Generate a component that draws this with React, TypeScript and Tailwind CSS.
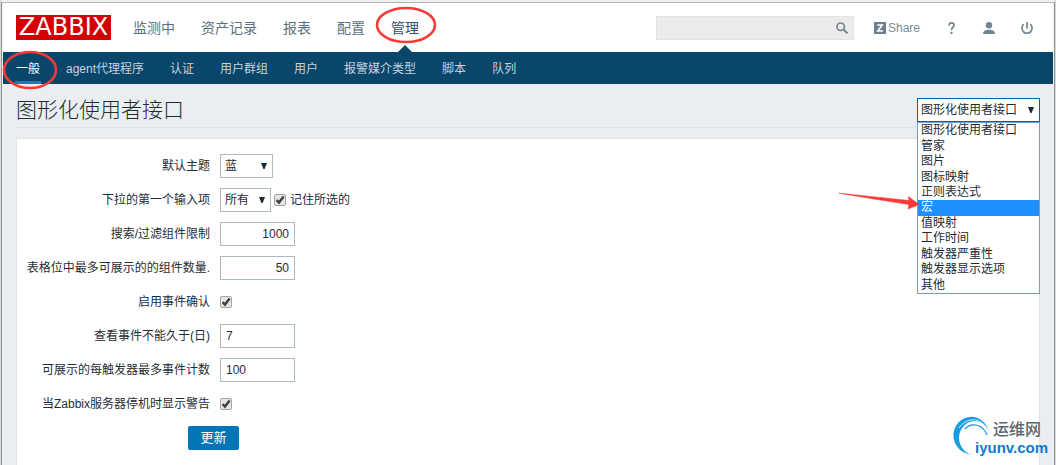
import { useState } from "react";
import type { ReactNode } from "react";

const mainMenu = ["监测中", "资产记录", "报表", "配置", "管理"];

const subMenu = [
    "一般",
    "agent代理程序",
    "认证",
    "用户群组",
    "用户",
    "报警媒介类型",
    "脚本",
    "队列",
];

const sections = [
    "图形化使用者接口",
    "管家",
    "图片",
    "图标映射",
    "正则表达式",
    "宏",
    "值映射",
    "工作时间",
    "触发器严重性",
    "触发器显示选项",
    "其他",
];

function Arrow() {
    return (
        <svg
            viewBox="0 0 6 6"
            className="pointer-events-none absolute right-[6px] top-1/2 h-[6px] w-[6px] -translate-y-1/2"
        >
            <path d="M0 0h6L3.6 6H2.4z" fill="#1f2c33" />
        </svg>
    );
}

function Checkbox({ id }: { id: string }) {
    return (
        <span className="relative block h-3 w-3">
            <input
                id={id}
                type="checkbox"
                defaultChecked
                className="peer block h-3 w-3 appearance-none rounded-[2px] border border-[#a5a5a5] bg-[#e6e6e6]"
            />
            <svg
                viewBox="0 0 12 12"
                className="pointer-events-none absolute inset-0 hidden h-3 w-3 peer-checked:block"
            >
                <path d="M2.6 6.2l2.4 2.4 4.6-6" fill="none" stroke="#404040" strokeWidth="2.4" />
            </svg>
        </span>
    );
}

function Row({ id, label, children }: { id: string; label: string; children: ReactNode }) {
    return (
        <div className="flex h-6 items-center gap-[10px]">
            <label htmlFor={id} className="w-[193px] shrink-0 whitespace-nowrap text-right">
                {label}
            </label>
            {children}
        </div>
    );
}

function NumberBox({ id, value, right }: { id: string; value: string; right?: boolean }) {
    return (
        <input
            id={id}
            type="text"
            defaultValue={value}
            className={`h-6 w-[75px] border border-[#acbbc2] bg-white px-[5px] ${right ? "text-right" : "text-left"}`}
        />
    );
}

function Header() {
    return (
        <header>
            <div className="flex h-[49px] items-center bg-white pl-[13px] pr-5 text-[#5b717d]">
                <a
                    href="#"
                    aria-label="ZABBIX"
                    className="flex h-[25px] w-[95px] items-center justify-center bg-[#d40000] font-['DejaVu_Sans',sans-serif] text-2xl leading-[25px] text-white"
                >
                    ZABBIX
                </a>
                <nav className="ml-[22px] flex gap-[26px] text-sm">
                    {mainMenu.map((item) => (
                        <a
                            key={item}
                            href="#"
                            className={
                                item === "管理"
                                    ? "relative whitespace-nowrap text-[#36505f]"
                                    : "whitespace-nowrap"
                            }
                        >
                            {item}
                            {item === "管理" && (
                                <>
                                    <svg viewBox="0 0 16 8" className="absolute left-[6px] top-[27px] h-2 w-4">
                                        <path d="M0 8L8 0l8 8z" fill="#0a466a" />
                                    </svg>
                                    <svg viewBox="0 0 62 38" className="absolute -left-[16px] -top-[12px] h-[38px] w-[62px]">
                                        <ellipse cx="31" cy="19" rx="29" ry="17" fill="none" stroke="#f93a37" strokeWidth="2.6" />
                                    </svg>
                                </>
                            )}
                        </a>
                    ))}
                </nav>
                <div className="relative ml-auto">
                    <input
                        type="text"
                        aria-label="搜索"
                        className="block h-6 w-[198px] border border-[#e3e3e3] bg-[#ebebeb] pl-2 pr-7"
                    />
                    <button type="button" aria-label="搜索" className="absolute right-[6px] top-[6px]">
                        <svg viewBox="0 0 12 12" className="block h-3 w-3">
                            <circle cx="4.7" cy="4.7" r="3.7" fill="none" stroke="#70858f" strokeWidth="1.7" />
                            <path d="M7.4 7.4l4 4" stroke="#70858f" strokeWidth="2" />
                        </svg>
                    </button>
                </div>
                <a href="#" className="ml-5 flex items-center gap-[2px] text-[#768d99]">
                    <svg viewBox="0 0 12 12" className="h-3 w-3">
                        <path d="M0 0h12v12H0z" fill="#6a808c" />
                        <path d="M3.2 3h5L3.8 9h5.2" fill="none" stroke="#fff" strokeWidth="1.6" />
                    </svg>
                    Share
                </a>
                <a href="#" aria-label="帮助" className="ml-7">
                    <svg viewBox="0 0 7 12" className="h-3 w-[7px]">
                        <path d="M1 3.6C.8-.1 6.2-.1 6 3.4 5.9 5.2 3.5 5.2 3.5 8.2" fill="none" stroke="#70858f" strokeWidth="1.7" />
                        <path d="M2.5 9.8h2V12h-2z" fill="#70858f" />
                    </svg>
                </a>
                <a href="#" aria-label="用户" className="ml-7">
                    <svg viewBox="0 0 12 12" className="h-3 w-3">
                        <circle cx="6" cy="3.2" r="3.2" fill="#70858f" />
                        <path d="M0 12c0-3 2.5-4.2 6-4.2s6 1.2 6 4.2z" fill="#70858f" />
                    </svg>
                </a>
                <a href="#" aria-label="退出" className="ml-[26px]">
                    <svg viewBox="0 0 12 12" className="h-3 w-3" fill="none" stroke="#70858f" strokeWidth="1.7">
                        <path d="M6 0v6.5M2.8 2.2A5.1 5.1 0 1 0 9.2 2.2" />
                    </svg>
                </a>
            </div>
            <nav className="flex h-8 items-center gap-[26px] bg-[#0a466a] px-[13px] pt-px text-[#c3d3dd]">
                {subMenu.map((item) => (
                    <a
                        key={item}
                        href="#"
                        className={
                            item === "一般"
                                ? "relative flex h-[31px] items-center whitespace-nowrap text-white"
                                : "whitespace-nowrap"
                        }
                    >
                        {item}
                        {item === "一般" && (
                            <>
                                <span className="absolute -left-px bottom-0 h-[3px] w-[26px] bg-[#0f80c8]" />
                                <svg viewBox="0 0 56 40" className="absolute -left-[14px] -top-[3px] z-10 h-10 w-14">
                                    <ellipse cx="28" cy="20" rx="26" ry="18" fill="none" stroke="#f93a37" strokeWidth="2.6" />
                                </svg>
                            </>
                        )}
                    </a>
                ))}
            </nav>
        </header>
    );
}

function SectionPicker() {
    const [section, setSection] = useState(sections[0]);

    return (
        <div className="relative w-[123px]">
            <select
                aria-label="图形化使用者接口"
                value={section}
                onChange={(e) => setSection(e.target.value)}
                className="block h-6 w-full appearance-none border border-[#0b64a0] bg-white pl-[3px]"
            >
                {sections.map((name) => (
                    <option key={name}>{name}</option>
                ))}
            </select>
            <Arrow />
            <ul className="absolute left-0 top-6 z-10 flex h-[172px] w-full flex-col border border-[#7b98d3] bg-white">
                {sections.map((name) => (
                    <li
                        key={name}
                        onClick={() => setSection(name)}
                        className={`flex flex-1 items-center whitespace-nowrap pl-[3px] leading-[15px] ${name === "宏" ? "bg-[#1e90ff] text-white" : ""}`}
                    >
                        {name}
                    </li>
                ))}
            </ul>
            {/* Pointer to the macros entry */}
            <svg viewBox="0 0 80 20" className="pointer-events-none absolute -left-[78px] top-[94px] z-20 h-5 w-20">
                <path d="M0 1.2L70 8.5l-.5-4L80 12.500l-11 4.500 1-4.500L35 7z" fill="#f93a37" stroke="#f93a37" strokeWidth="0.6" />
            </svg>
        </div>
    );
}

function Watermark() {
    return (
        <div className="pointer-events-none absolute bottom-[4px] right-px h-[46px] w-[101px]">
            <svg viewBox="0 0 40 44" className="absolute left-0 top-0 h-11 w-10">
                <path d="M37 17C33 1 16-3 6 8-4 20 3 37 19 40 6 34 4 20 11 12 18 3 32 4 37 17z" fill="#1a9ce0" />
                <path
                    d="M35 14C29 2 14 2 7 13M34 14C27 5 15 5 9 16"
                    fill="none"
                    stroke="#fff"
                    strokeWidth="0.8"
                />
                <path d="M35 20C31 9 19 7 13 14" fill="none" stroke="#1a8fd6" strokeWidth="1.2" />
            </svg>
            <span className="absolute left-[41px] top-[5px] whitespace-nowrap text-base font-medium leading-5 text-[#5c6670]">
                运维网
            </span>
            <span className="absolute left-[23px] top-[23px] text-[15px] font-bold leading-5 text-[#0f79cf]">
                iyunv.com
            </span>
        </div>
    );
}

export default function App() {
    return (
        <div className="border-x border-x-[#d6d6d6] bg-[#f0f0f0] pt-[2px] font-['Liberation_Sans','Noto_Sans_CJK_SC',sans-serif] text-xs text-[#1f2c33]">
            <div className="relative flex min-h-[calc(100vh-2px)] flex-col border-x border-t border-x-[#969696] border-t-[#b4b4b4] bg-[#ebeef0] px-px">
                <Header />
                <main className="flex flex-1 flex-col px-[13px]">
                    <div className="flex h-11 items-start justify-between border-b border-[#dfe4e7] pt-[14px]">
                        <h1 className="text-[21px] font-light leading-6">图形化使用者接口</h1>
                        <SectionPicker />
                    </div>
                    <form
                        onSubmit={(e) => e.preventDefault()}
                        className="mt-[10px] flex flex-1 flex-col gap-[10px] border border-b-0 border-[#dfe4e7] bg-white py-[15px]"
                    >
                        <Row id="theme" label="默认主题">
                            <span className="relative">
                                <select id="theme" className="block h-6 w-[53px] appearance-none border border-[#acbbc2] bg-white pl-1">
                                    <option>蓝</option>
                                </select>
                                <Arrow />
                            </span>
                        </Row>
                        <Row id="first-entry" label="下拉的第一个输入项">
                            <span className="relative">
                                <select id="first-entry" className="block h-6 w-[51px] appearance-none border border-[#acbbc2] bg-white pl-1">
                                    <option>所有</option>
                                </select>
                                <Arrow />
                            </span>
                            <span className="-ml-[7px] flex items-center gap-1">
                                <Checkbox id="remember" />
                                <label htmlFor="remember">记住所选的</label>
                            </span>
                        </Row>
                        <Row id="search-limit" label="搜索/过滤组件限制">
                            <NumberBox id="search-limit" value="1000" right />
                        </Row>
                        <Row id="max-in-table" label="表格位中最多可展示的的组件数量.">
                            <NumberBox id="max-in-table" value="50" right />
                        </Row>
                        <Row id="event-ack" label="启用事件确认">
                            <Checkbox id="event-ack" />
                        </Row>
                        <Row id="event-expire" label="查看事件不能久于(日)">
                            <NumberBox id="event-expire" value="7" />
                        </Row>
                        <Row id="event-max" label="可展示的每触发器最多事件计数">
                            <NumberBox id="event-max" value="100" />
                        </Row>
                        <Row id="server-check" label="当Zabbix服务器停机时显示警告">
                            <Checkbox id="server-check" />
                        </Row>
                        <button type="submit" className="ml-[171px] h-6 w-[51px] rounded-[2px] bg-[#0275b8] text-[13px] text-white">
                            更新
                        </button>
                    </form>
                </main>
                <Watermark />
            </div>
        </div>
    );
}
